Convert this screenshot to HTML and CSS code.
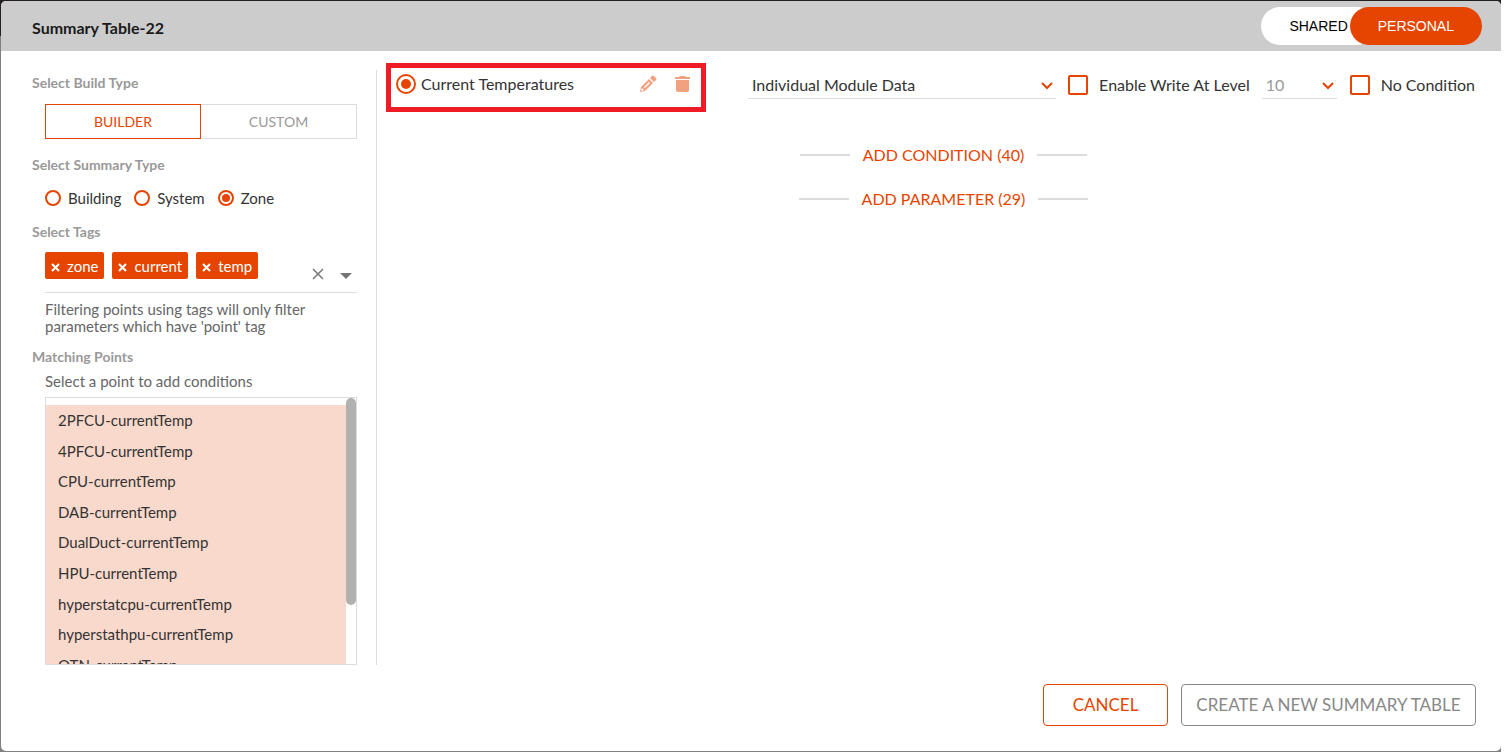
FILE: index.html
```html
<!DOCTYPE html>
<html lang="en">
<head>
<meta charset="utf-8">
<title>Summary Table-22</title>
<link rel="stylesheet" href="styles.css">
</head>
<body>
<div class="backdrop">
  <div class="dialog" role="dialog" aria-labelledby="dialog-title">
    <header class="dialog-header">
      <h1 class="dialog-title" id="dialog-title">Summary Table-22</h1>
      <div class="scope-switch">
        <button type="button" class="scope">SHARED</button>
        <button type="button" class="scope scope-active" aria-pressed="true">PERSONAL</button>
      </div>
    </header>

    <div class="dialog-body">
      <aside class="sidebar">
        <h2 class="section-title">Select Build Type</h2>
        <div class="build-tabs">
          <button type="button" class="build-tab build-tab-active">BUILDER</button>
          <button type="button" class="build-tab">CUSTOM</button>
        </div>

        <h2 class="section-title">Select Summary Type</h2>
        <div class="summary-types">
          <label class="choice"><input class="radio" type="radio" name="summary">Building</label>
          <label class="choice"><input class="radio" type="radio" name="summary">System</label>
          <label class="choice"><input class="radio" type="radio" name="summary" checked>Zone</label>
        </div>

        <h2 class="section-title">Select Tags</h2>
        <div class="tag-field">
          <ul class="tags">
            <li class="tag"><button type="button" class="tag-remove" aria-label="Remove"><svg width="9" height="9" viewBox="0 0 9 9"><path d="M1 1l7 7M8 1l-7 7"/></svg></button>zone</li>
            <li class="tag"><button type="button" class="tag-remove" aria-label="Remove"><svg width="9" height="9" viewBox="0 0 9 9"><path d="M1 1l7 7M8 1l-7 7"/></svg></button>current</li>
            <li class="tag"><button type="button" class="tag-remove" aria-label="Remove"><svg width="9" height="9" viewBox="0 0 9 9"><path d="M1 1l7 7M8 1l-7 7"/></svg></button>temp</li>
          </ul>
          <div class="tag-actions">
            <button type="button" class="icon-button" aria-label="Clear"><svg width="12" height="12" viewBox="0 0 12 12"><path class="clear-stroke" d="M1 1l10 10M11 1L1 11"/></svg></button>
            <button type="button" class="icon-button" aria-label="Open"><svg width="12" height="12" viewBox="0 0 12 12"><path class="arrow-fill" d="M0 5h12L6 11z"/></svg></button>
          </div>
        </div>
        <p class="hint">Filtering points using tags will only filter parameters which have 'point' tag</p>

        <h2 class="section-title">Matching Points</h2>
        <p class="list-label" id="points-label">Select a point to add conditions</p>
        <div class="point-box">
          <div class="point-view">
            <ul class="points" role="listbox" aria-labelledby="points-label" tabindex="0">
              <li class="point" role="option">2PFCU-currentTemp</li>
              <li class="point" role="option">4PFCU-currentTemp</li>
              <li class="point" role="option">CPU-currentTemp</li>
              <li class="point" role="option">DAB-currentTemp</li>
              <li class="point" role="option">DualDuct-currentTemp</li>
              <li class="point" role="option">HPU-currentTemp</li>
              <li class="point" role="option">hyperstatcpu-currentTemp</li>
              <li class="point" role="option">hyperstathpu-currentTemp</li>
              <li class="point" role="option">OTN-currentTemp</li>
            </ul>
          </div>
          <div class="track"><div class="thumb"></div></div>
        </div>
      </aside>

      <main class="main">
        <div class="toolbar">
          <div class="entry">
            <label class="entry-name"><input class="radio radio-large" type="radio" name="entry" checked>Current Temperatures</label>
            <button type="button" class="icon-button" aria-label="Edit"><svg width="18" height="18" viewBox="0 0 18 18"><path class="soft" fill-rule="evenodd" d="M1 17l1-5L10 4l4 4-8 8zM3 13l-1 2 1 1 2-1zM5 12l5-5 1 1-5 5zM11 3l2-2q1-1 2 0l2 2q1 1 0 2l-2 2z"/></svg></button>
            <button type="button" class="icon-button" aria-label="Delete"><svg width="16" height="18" viewBox="0 0 16 18"><path class="soft" d="M0 2h4l1-1h5l1 1h4v2H0zM1 5h13v10q0 2-2 2H3q-2 0-2-2z"/></svg></button>
          </div>
          <div class="select-wrap module">
            <select class="select" aria-label="Module data"><option>Individual Module Data</option></select>
            <svg class="chevron" width="12" height="8" viewBox="0 0 12 8"><path d="M1 1l5 5 5-5"/></svg>
          </div>
          <label class="check-label write"><input class="checkbox" type="checkbox">Enable Write At Level</label>
          <div class="select-wrap level">
            <select class="select select-muted" aria-label="Level"><option>10</option></select>
            <svg class="chevron" width="12" height="8" viewBox="0 0 12 8"><path d="M1 1l5 5 5-5"/></svg>
          </div>
          <label class="check-label none"><input class="checkbox" type="checkbox">No Condition</label>
        </div>
        <div class="additions">
          <button type="button" class="add">ADD CONDITION (40)</button>
          <button type="button" class="add">ADD PARAMETER (29)</button>
        </div>
      </main>
    </div>

    <footer class="dialog-footer">
      <button type="button" class="action action-cancel">CANCEL</button>
      <button type="button" class="action action-create">CREATE A NEW SUMMARY TABLE</button>
    </footer>
  </div>
</div>
</body>
</html>
```

FILE: styles.css
```css
* { box-sizing: border-box; }

body {
  margin: 0;
  background: #fff;
  color: #333;
  font-family: Lato, sans-serif;
  font-size: 15px;
}

h1, h2, p, ul { margin: 0; padding: 0; }
ul { list-style: none; }
button { margin: 0; padding: 0; border: 0; background: none; font: inherit; cursor: pointer; }
svg { display: block; }

.backdrop {
  display: flex;
  min-height: 100vh;
  margin-right: 4px;
  padding: 1px 0 1px 1px;
  background: linear-gradient(#231f20 0 36px, #808080 36px);
}

.dialog {
  display: flex;
  flex: 1;
  flex-direction: column;
  overflow: hidden;
  border-radius: 5px;
  background: #fff;
}

.dialog-header {
  display: flex;
  align-items: center;
  justify-content: space-between;
  height: 50px;
  padding: 0 19px 0 31px;
  background: #ccc;
}

.dialog-title {
  margin-top: 4px;
  color: #1a1a1a;
  font-size: 16px;
  line-height: 20px;
}

.scope-switch { display: flex; }

.scope {
  height: 38px;
  padding: 0 28px;
  border-radius: 19px;
  background: #fff;
  color: #000;
  font-family: "Liberation Sans", Arial, sans-serif;
  font-size: 14px;
}

.scope-active {
  margin-left: -26px;
  background: #e54500;
  color: #fff;
}

.dialog-body {
  display: flex;
  flex: 1;
  margin-top: 19px;
}

.sidebar {
  width: 376px;
  padding: 3px 19px 0 31px;
  border-right: 1px solid #dcdcdc;
}

.section-title {
  color: #999;
  font-size: 14px;
  line-height: 20px;
}

.build-tabs {
  display: grid;
  grid-template-columns: 1fr 1fr;
  margin: 11px 0 16px 13px;
}

.build-tab {
  height: 35px;
  border: 1px solid #dcdcdc;
  border-left: 0;
  color: #999;
  font-size: 14px;
}

.build-tab-active {
  border: 1px solid #e54500;
  color: #e54500;
}

.summary-types {
  display: flex;
  gap: 13px;
  margin: 13px 0 14px 13px;
}

.choice {
  display: flex;
  align-items: center;
  gap: 7px;
  line-height: 20px;
}

.radio, .checkbox {
  flex: none;
  width: 16px;
  height: 16px;
  margin: 0;
  border: 2px solid #e54500;
  appearance: none;
}

.radio { border-radius: 50%; }

.radio:checked {
  padding: 2px;
  background: #e54500 content-box;
}

.radio-large { width: 20px; height: 20px; }
.radio-large:checked { padding: 3px; }

.checkbox {
  width: 20px;
  height: 20px;
  border-radius: 2px;
}

.tag-field {
  display: flex;
  justify-content: space-between;
  height: 41px;
  margin: 10px 0 8px 13px;
  border-bottom: 1px solid #dcdcdc;
}

.tags { display: flex; gap: 8px; }

.tag {
  display: flex;
  align-items: center;
  gap: 7px;
  height: 27px;
  padding: 1px 6px 0;
  border-radius: 2px;
  background: #e54500;
  color: #fff;
}

.tag-remove { padding-top: 2px; stroke: #fff; stroke-width: 2; }

.tag-actions {
  display: flex;
  align-items: center;
  gap: 16px;
  padding: 4px 5px 0 0;
}

.clear-stroke { stroke: #777; stroke-width: 1.5; }
.arrow-fill { fill: #757575; }

.hint {
  margin: 0 0 12px 13px;
  color: #666;
  line-height: 17px;
}

.list-label {
  margin: 4px 0 6px 13px;
  color: #666;
  line-height: 20px;
}

.point-box {
  display: flex;
  height: 268px;
  margin-left: 13px;
  border: 1px solid #dcdcdc;
}

.point-view {
  flex: 1;
  padding-top: 7px;
  overflow: hidden;
}

.points {
  display: grid;
  grid-auto-rows: 1fr;
  height: 275px;
}

.point {
  display: flex;
  align-items: center;
  padding: 0 12px;
  background: #f9d9cc;
}

.track { width: 10px; }

.thumb {
  height: 207px;
  border-radius: 5px;
  background: #b1b1b1;
}

.main {
  flex: 1;
  margin-left: 9px;
}

.toolbar {
  display: flex;
  align-items: flex-start;
  margin-top: -7px;
  padding-right: 26px;
  font-size: 16px;
}

.entry {
  display: flex;
  align-items: center;
  width: 320px;
  height: 49px;
  padding: 0 10px 8px 5px;
  border: 5px solid #ee1c25;
  gap: 18px;
}

.entry-name {
  display: flex;
  flex: 1;
  align-items: center;
  gap: 5px;
}

.soft { fill: #f2a17f; }

.select-wrap {
  position: relative;
  height: 28px;
  margin-top: 8px;
  border-bottom: 1px solid #dcdcdc;
}

.module { flex: 1; margin-left: 42px; }
.level { width: 75px; margin-left: 12px; }

.select {
  width: 100%;
  height: 26px;
  padding: 0 4px;
  border: 0;
  background: transparent;
  color: #333;
  font: inherit;
  appearance: none;
}

.select-muted { color: #999; }

.chevron {
  position: absolute;
  right: 3px;
  bottom: 8px;
  fill: none;
  stroke: #e54500;
  stroke-width: 2;
  pointer-events: none;
}

.check-label {
  display: flex;
  align-items: center;
  gap: 11px;
  margin-top: 12px;
  line-height: 20px;
}

.write { margin-left: 12px; }
.none { margin-left: 13px; }

.additions {
  display: grid;
  justify-items: center;
  gap: 20px;
  margin-top: 31px;
}

.add {
  display: flex;
  align-items: center;
  gap: 13px;
  color: #e54500;
  font-size: 16px;
  line-height: 24px;
}

.add::before, .add::after {
  content: "";
  width: 50px;
  height: 2px;
  background: #dcdcdc;
}

.dialog-footer {
  display: flex;
  justify-content: flex-end;
  gap: 13px;
  padding: 19px 25px 25px;
}

.action {
  height: 42px;
  padding-bottom: 2px;
  border: 1px solid #888;
  border-radius: 4px;
  color: #888;
  font-size: 17px;
}

.action-cancel {
  width: 125px;
  border-color: #e54500;
  color: #e54500;
}

.action-create { width: 295px; }
```
